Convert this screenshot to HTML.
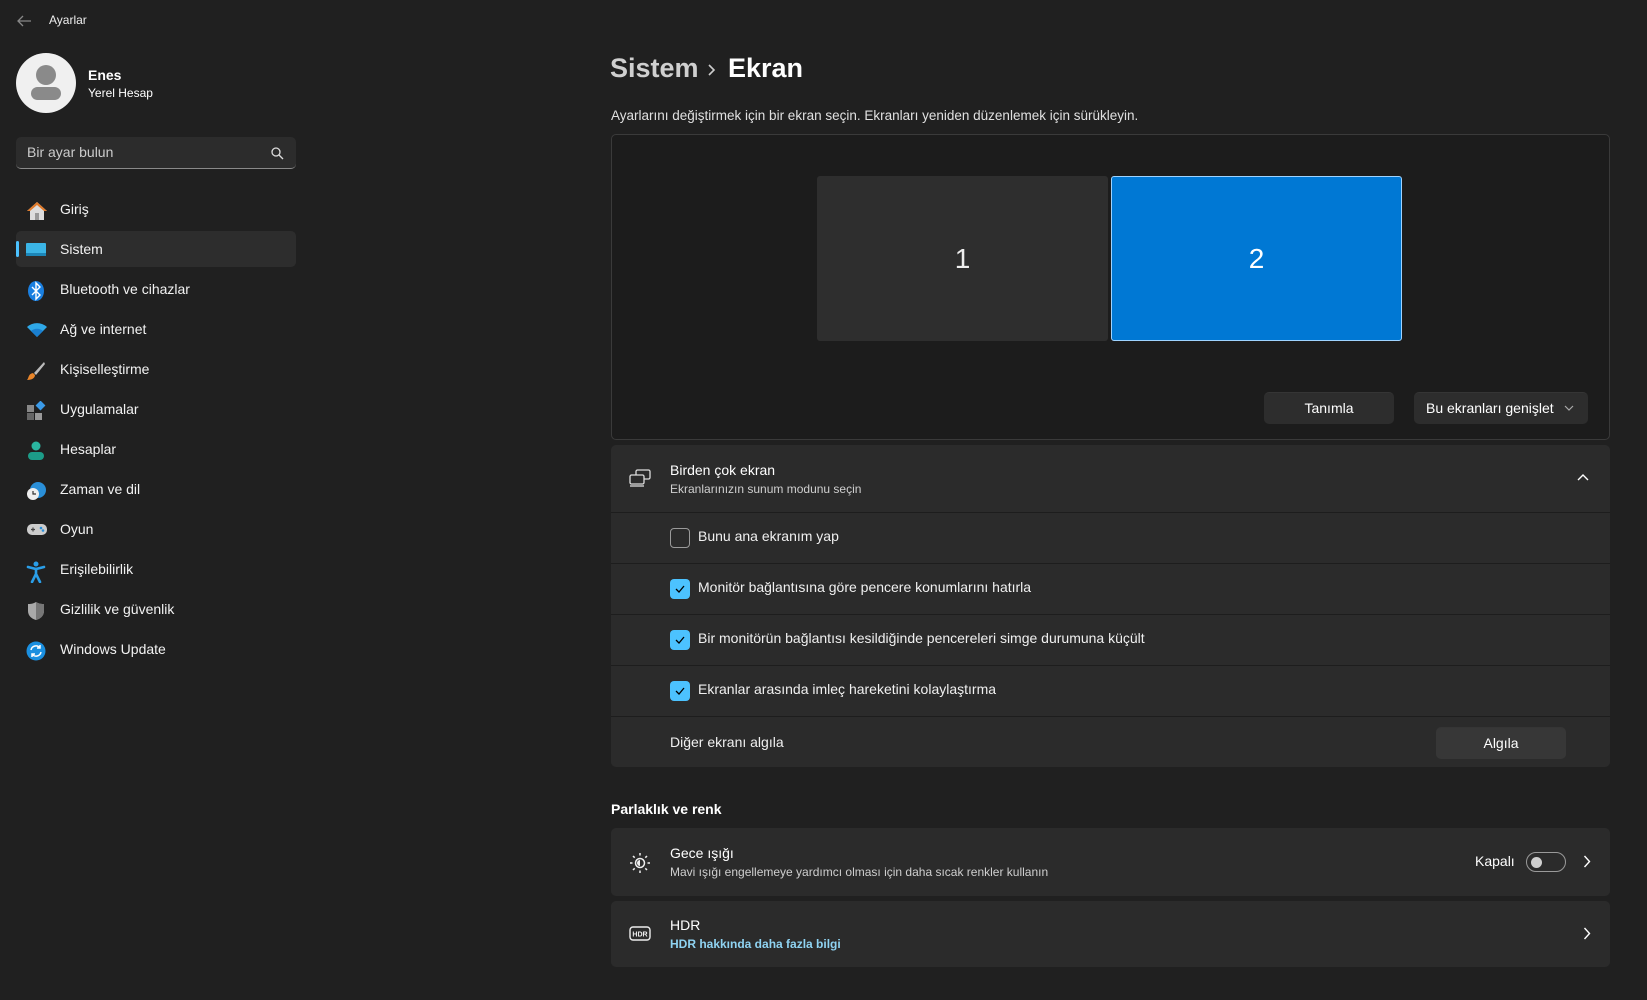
<!DOCTYPE html>
<html><head><meta charset="utf-8">
<style>
*{margin:0;padding:0;box-sizing:border-box}
body{width:1647px;height:1000px;background:#202020;font-family:"Segoe UI","Liberation Sans",sans-serif;color:#fff;position:relative;overflow:hidden;font-size:14px}
.a{position:absolute}
.nav{position:absolute;left:16px;width:280px;height:36px;border-radius:5px}
.nav .t{position:absolute;left:44px;top:10px;font-size:14px;color:#f2f2f2}
.nav svg{position:absolute;left:10px;top:10px}
.card{position:absolute;left:611px;width:999px;background:#2b2b2b;border-radius:5px}
.row{position:absolute;left:611px;width:999px;background:#2b2b2b;border-top:1px solid #1d1d1d}
.cb{position:absolute;left:59px;width:20px;height:20px;border-radius:4px}
.cb.on{background:#4cc2ff}
.cb.off{border:1px solid #9a9a9a}
.lbl{position:absolute;left:87px;font-size:14px;color:#f0f0f0}
.btn{position:absolute;background:#2d2d2d;border-radius:5px;font-size:14px;text-align:center;color:#fff;border-top:1px solid #353535}
.sub{font-size:12px;color:#cfcfcf}
</style></head><body>
<svg class="a" style="left:16px;top:14px" width="16" height="14" viewBox="0 0 16 14"><path d="M15 7H2M7 2L2 7l5 5" stroke="#888" stroke-width="1.3" fill="none"/></svg>
<div class="a" style="left:49px;top:13px;font-size:12px;color:#eee">Ayarlar</div>

<div class="a" style="left:16px;top:53px;width:60px;height:60px;border-radius:50%;background:#f0f0f0"></div>
<div class="a" style="left:36px;top:65px;width:20px;height:20px;border-radius:50%;background:#8a8a8a"></div>
<div class="a" style="left:31px;top:87px;width:30px;height:13px;border-radius:7px;background:#8a8a8a"></div>
<div class="a" style="left:88px;top:67px;font-size:14px;font-weight:bold">Enes</div>
<div class="a" style="left:88px;top:86px;font-size:12px">Yerel Hesap</div>

<div class="a" style="left:16px;top:137px;width:280px;height:32px;background:#2c2c2c;border-radius:5px;border-bottom:1px solid #8a8a8a"></div>
<div class="a" style="left:27px;top:144px;font-size:14px;color:#ccc">Bir ayar bulun</div>
<svg class="a" style="left:271px;top:147px" width="13" height="13" viewBox="0 0 13 13"><circle cx="5" cy="5" r="4" stroke="#ddd" stroke-width="1.3" fill="none"/><path d="M8 8l4 4" stroke="#ddd" stroke-width="1.3"/></svg>

<div class="nav" style="top:191px"><svg width="22" height="20" viewBox="0 0 22 20"><path d="M11 1L1 10h3v9h14v-9h3z" fill="#ddd"/><path d="M11 1L1 10h3L11 4l7 6h3z" fill="#e07a2a"/><rect x="9" y="12" width="4" height="7" fill="#999"/></svg><span class="t">Giriş</span></div>
<div class="nav" style="top:231px;background:#2d2d2d"><div class="a" style="left:0;top:10px;width:3px;height:16px;border-radius:2px;background:#4cc2ff"></div><svg width="20" height="18" viewBox="0 0 20 18"><rect x="0" y="2" width="20" height="13" rx="1" fill="#3bb5e6"/><rect x="0" y="12" width="20" height="3" fill="#1c86b8"/></svg><span class="t">Sistem</span></div>
<div class="nav" style="top:271px"><svg width="20" height="20" viewBox="0 0 20 20"><ellipse cx="10" cy="10" rx="8" ry="10" fill="#1a7fe0"/><path d="M6 6l8 8-4 4V2l4 4-8 8" stroke="#fff" stroke-width="1.4" fill="none"/></svg><span class="t">Bluetooth ve cihazlar</span></div>
<div class="nav" style="top:311px"><svg width="22" height="18" viewBox="0 0 22 18"><path d="M1 6a15 15 0 0 1 20 0L11 16z" fill="#2fa8e8"/><path d="M5 10a9 9 0 0 1 12 0L11 16z" fill="#1a7fd0"/></svg><span class="t">Ağ ve internet</span></div>
<div class="nav" style="top:351px"><svg width="20" height="20" viewBox="0 0 20 20"><path d="M18 1L8 12l2 2L19 3z" fill="#bbb"/><path d="M7 12l2 2c0 3-3 5-8 5 2-2 1-6 6-7z" fill="#e8852a"/></svg><span class="t">Kişiselleştirme</span></div>
<div class="nav" style="top:391px"><svg width="20" height="20" viewBox="0 0 20 20"><rect x="1" y="4" width="7" height="7" fill="#888"/><rect x="1" y="12" width="7" height="7" fill="#666"/><rect x="9" y="12" width="7" height="7" fill="#999"/><rect x="11" y="1" width="7" height="7" fill="#3a9ae8" transform="rotate(45 14.5 4.5)"/></svg><span class="t">Uygulamalar</span></div>
<div class="nav" style="top:431px"><svg width="20" height="20" viewBox="0 0 20 20"><circle cx="10" cy="5" r="4.5" fill="#2ab5a0"/><rect x="2" y="11" width="16" height="8" rx="4" fill="#1c9c88"/></svg><span class="t">Hesaplar</span></div>
<div class="nav" style="top:471px"><svg width="22" height="20" viewBox="0 0 22 20"><circle cx="12" cy="9" r="8" fill="#2a8fd8"/><circle cx="7" cy="13" r="6" fill="#eee"/><path d="M7 10v3h3" stroke="#333" stroke-width="1.2" fill="none"/></svg><span class="t">Zaman ve dil</span></div>
<div class="nav" style="top:511px"><svg width="22" height="16" viewBox="0 0 22 16"><rect x="1" y="3" width="20" height="11" rx="5" fill="#ccc"/><path d="M5 8.5h4M7 6.5v4" stroke="#444" stroke-width="1.2"/><circle cx="15" cy="7" r="1.3" fill="#2a8fd8"/><circle cx="17" cy="9.5" r="1.3" fill="#2a8fd8"/></svg><span class="t">Oyun</span></div>
<div class="nav" style="top:551px"><svg width="20" height="22" viewBox="0 0 20 22"><circle cx="10" cy="3" r="2.5" fill="#2a9ee8"/><path d="M2 6l8 2 8-2M10 8v5l-4 8M10 13l4 8" stroke="#2a9ee8" stroke-width="2.6" fill="none" stroke-linecap="round"/></svg><span class="t">Erişilebilirlik</span></div>
<div class="nav" style="top:591px"><svg width="20" height="20" viewBox="0 0 20 20"><path d="M10 1C7 3 4 3 2 3v7c0 5 4 8 8 9 4-1 8-4 8-9V3c-2 0-5 0-8-2z" fill="#aaa"/><path d="M10 1v18c4-1 8-4 8-9V3c-2 0-5 0-8-2z" fill="#777"/></svg><span class="t">Gizlilik ve güvenlik</span></div>
<div class="nav" style="top:631px"><svg width="20" height="20" viewBox="0 0 20 20"><circle cx="10" cy="10" r="9.5" fill="#1a8fe0"/><path d="M5 9a5 5 0 0 1 9-2M15 11a5 5 0 0 1-9 2" stroke="#fff" stroke-width="1.5" fill="none"/><path d="M14 4v3h-3M6 16v-3h3" stroke="#fff" stroke-width="1.5" fill="none"/></svg><span class="t">Windows Update</span></div>

<div class="a" style="left:610px;top:53px;font-size:27px;font-weight:600;color:#cfcfcf">Sistem</div>
<svg class="a" style="left:706px;top:63px" width="10" height="14" viewBox="0 0 10 14"><path d="M3 2l5 5-5 5" stroke="#ccc" stroke-width="1.6" fill="none"/></svg>
<div class="a" style="left:728px;top:53px;font-size:27px;font-weight:600">Ekran</div>
<div class="a" style="left:611px;top:108px;font-size:13.5px;color:#e0e0e0">Ayarlarını değiştirmek için bir ekran seçin. Ekranları yeniden düzenlemek için sürükleyin.</div>

<div class="a" style="left:611px;top:134px;width:999px;height:306px;background:#1c1c1c;border:1px solid #3a3a3a;border-radius:5px"></div>
<div class="a" style="left:817px;top:176px;width:291px;height:165px;background:#2e2e2e;border-radius:3px;font-size:28px;text-align:center;line-height:165px;color:#eee">1</div>
<div class="a" style="left:1111px;top:176px;width:291px;height:165px;background:#0078d4;border:1px solid #9fd3ff;border-radius:3px;font-size:28px;text-align:center;line-height:163px">2</div>
<div class="btn" style="left:1264px;top:392px;width:130px;height:32px;line-height:31px">Tanımla</div>
<div class="btn" style="left:1414px;top:392px;width:174px;height:32px;line-height:31px;text-align:left;padding-left:12px">Bu ekranları genişlet<svg class="a" style="left:150px;top:12px" width="10" height="7" viewBox="0 0 10 7"><path d="M1 1l4 4 4-4" stroke="#aaa" stroke-width="1.2" fill="none"/></svg></div>

<div class="card" style="top:445px;height:67px;border-radius:5px 5px 0 0">
<svg class="a" style="left:18px;top:24px" width="22" height="18" viewBox="0 0 22 18"><rect x="7" y="1" width="14" height="9" rx="1.5" stroke="#ddd" stroke-width="1.3" fill="#2b2b2b"/><rect x="1" y="6" width="14" height="9" rx="1.5" stroke="#ddd" stroke-width="1.3" fill="#2b2b2b"/><path d="M1 17h14" stroke="#ddd" stroke-width="1.3"/></svg>
<div class="a" style="left:59px;top:17px;font-size:14px">Birden çok ekran</div>
<div class="a sub" style="left:59px;top:37px">Ekranlarınızın sunum modunu seçin</div>
<svg class="a" style="left:966px;top:28px" width="12" height="8" viewBox="0 0 12 8"><path d="M1 7l5-5 5 5" stroke="#fff" stroke-width="1.4" fill="none"/></svg>
</div>
<div class="row" style="top:512px;height:51px"><div class="cb off" style="top:15px"></div><div class="lbl" style="top:15px">Bunu ana ekranım yap</div></div>
<div class="row" style="top:563px;height:51px"><div class="cb on" style="top:15px"><svg width="20" height="20" viewBox="0 0 20 20"><path d="M6 10l3 3 5-6" stroke="#000" stroke-width="1.3" fill="none"/></svg></div><div class="lbl" style="top:15px">Monitör bağlantısına göre pencere konumlarını hatırla</div></div>
<div class="row" style="top:614px;height:51px"><div class="cb on" style="top:15px"><svg width="20" height="20" viewBox="0 0 20 20"><path d="M6 10l3 3 5-6" stroke="#000" stroke-width="1.3" fill="none"/></svg></div><div class="lbl" style="top:15px">Bir monitörün bağlantısı kesildiğinde pencereleri simge durumuna küçült</div></div>
<div class="row" style="top:665px;height:51px"><div class="cb on" style="top:15px"><svg width="20" height="20" viewBox="0 0 20 20"><path d="M6 10l3 3 5-6" stroke="#000" stroke-width="1.3" fill="none"/></svg></div><div class="lbl" style="top:15px">Ekranlar arasında imleç hareketini kolaylaştırma</div></div>
<div class="row" style="top:716px;height:51px;border-radius:0 0 5px 5px"><div class="lbl" style="left:59px;top:17px">Diğer ekranı algıla</div>
<div class="btn" style="left:825px;top:10px;width:130px;height:32px;line-height:31px;background:#373737">Algıla</div></div>

<div class="a" style="left:611px;top:801px;font-size:14px;font-weight:600">Parlaklık ve renk</div>

<div class="card" style="top:828px;height:68px">
<svg class="a" style="left:18px;top:24px" width="22" height="22" viewBox="0 0 22 22"><circle cx="11" cy="11" r="4.5" stroke="#eee" stroke-width="1.5" fill="none"/><path d="M11 8a3 3 0 0 0 0 6z" fill="#eee"/><g stroke="#eee" stroke-width="1.5"><path d="M11 1v2.5M11 18.5V21M1 11h2.5M18.5 11H21M4 4l1.7 1.7M16.3 16.3L18 18M4 18l1.7-1.7M16.3 5.7L18 4"/></g></svg>
<div class="a" style="left:59px;top:17px;font-size:14px">Gece ışığı</div>
<div class="a sub" style="left:59px;top:37px">Mavi ışığı engellemeye yardımcı olması için daha sıcak renkler kullanın</div>
<div class="a" style="left:864px;top:25px;font-size:14px">Kapalı</div>
<div class="a" style="left:915px;top:24px;width:40px;height:20px;border:1px solid #9a9a9a;border-radius:10px"><div class="a" style="left:4px;top:4px;width:11px;height:11px;border-radius:50%;background:#cfcfcf"></div></div>
<svg class="a" style="left:972px;top:27px" width="8" height="13" viewBox="0 0 8 13"><path d="M1.5 1l5 5.5-5 5.5" stroke="#fff" stroke-width="1.4" fill="none"/></svg>
</div>

<div class="card" style="top:901px;height:66px">
<svg class="a" style="left:18px;top:25px" width="22" height="15" viewBox="0 0 22 15"><rect x="1" y="1" width="20" height="13" rx="3" stroke="#eee" stroke-width="1.4" fill="none"/><text x="11" y="10.5" font-size="7" font-family="Liberation Sans" font-weight="bold" fill="#eee" text-anchor="middle">HDR</text></svg>
<div class="a" style="left:59px;top:16px;font-size:14px">HDR</div>
<div class="a" style="left:59px;top:36px;font-size:12px;font-weight:600;color:#8fd3f2">HDR hakkında daha fazla bilgi</div>
<svg class="a" style="left:972px;top:26px" width="8" height="13" viewBox="0 0 8 13"><path d="M1.5 1l5 5.5-5 5.5" stroke="#fff" stroke-width="1.4" fill="none"/></svg>
</div>
</body></html>
